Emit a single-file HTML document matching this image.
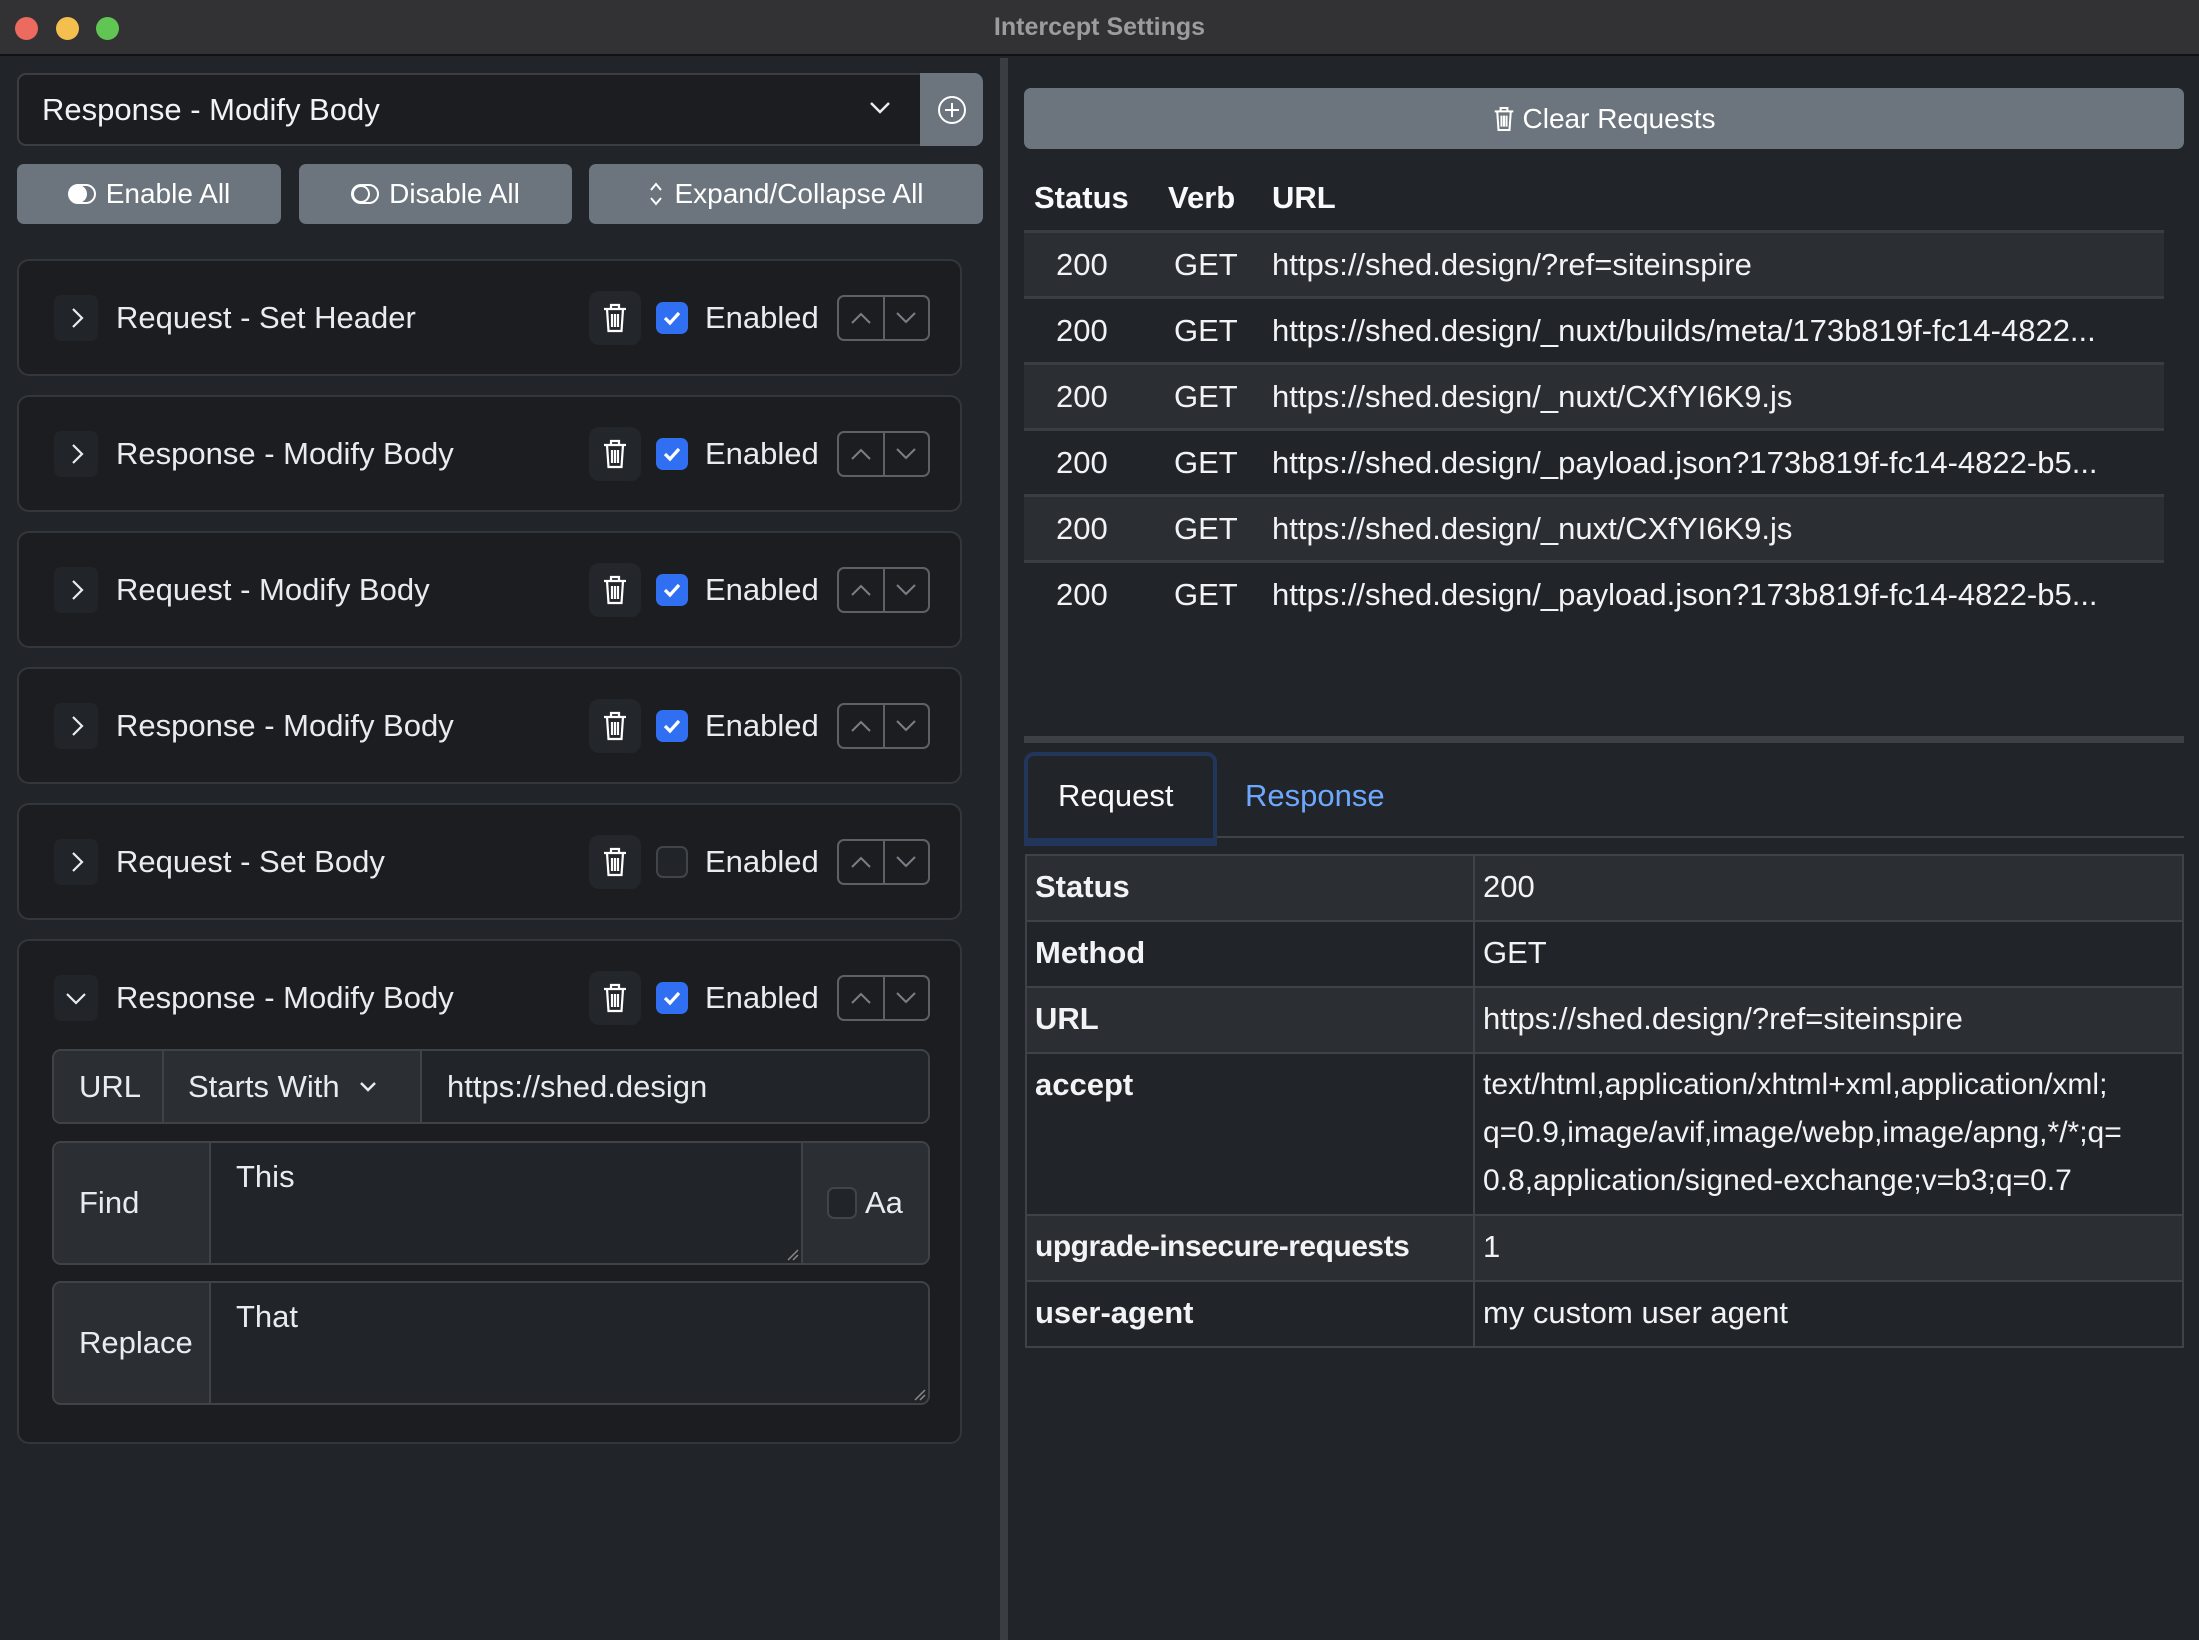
<!DOCTYPE html>
<html><head><meta charset="utf-8"><style>
*{box-sizing:border-box;margin:0;padding:0}
body{width:2199px;height:1640px;background:#212529;font-family:"Liberation Sans",sans-serif;color:#dee2e6;position:relative;overflow:hidden}
.a{position:absolute}
.title{left:0;top:0;width:2199px;height:56px;background:#323235;border-bottom:2px solid #111;text-align:center;line-height:54px;font-size:25px;font-weight:bold;color:#9c9c9e}
.dot{top:17px;width:23px;height:23px;border-radius:50%}
.btn{background:#6c757d;border-radius:7px;color:#fff;font-size:28px;display:flex;align-items:center;justify-content:center;gap:10px}
.card{left:17px;width:945px;background:#1b1d21;border:2px solid #33363b;border-radius:12px}
.chev{left:35px;width:44px;height:46px;background:#212429;border-radius:7px}
.lbl{left:97px;font-size:31px;color:#e9ecef;line-height:40px}
.trash{left:570px;width:52px;height:54px;background:#23262b;border-radius:10px;display:flex;align-items:center;justify-content:center}
.cb{left:637px;width:32px;height:32px;border-radius:7px;background:#316ff2;display:flex;align-items:center;justify-content:center}
.cb.off{background:#212429;border:2px solid #41454b}
.en{left:686px;font-size:31px;color:#e9ecef;line-height:40px}
.ud{left:818px;width:93px;height:46px;border:2px solid #5c6167;border-radius:7px;display:flex}
.ud div{flex:1;display:flex;align-items:center;justify-content:center}
.ud div+div{border-left:2px solid #5c6167}
.cell{font-size:31px;color:#e9ecef}
.row{left:1024px;width:1140px;height:66px;border-top:3px solid #3a3d42;font-size:31px;color:#f1f3f5;line-height:63px}
.row span{position:absolute;white-space:nowrap}
.dt{left:1025px;width:1159px;border:2px solid #3f4348;border-collapse:collapse;font-size:31px;color:#f1f3f5}
.dt td{border:2px solid #3f4348;padding:0 8px;vertical-align:top;line-height:48px}
</style></head><body>
<div class="a title">Intercept Settings</div>
<div class="a dot" style="left:15px;background:#ed6a5e"></div>
<div class="a dot" style="left:56px;background:#f5bf4f"></div>
<div class="a dot" style="left:96px;background:#61c554"></div>

<div class="a" style="left:1000px;top:58px;width:8px;height:1582px;background:#3a3d41"></div>
<div class="a" style="left:17px;top:73px;width:966px;height:73px;background:#1b1d21;border:2px solid #3a3d42;border-radius:9px"></div>
<div class="a" style="left:42px;top:90px;font-size:31px;color:#f1f3f5;line-height:40px">Response - Modify Body</div>
<svg class="a" style="left:868px;top:100px" width="24" height="16" viewBox="0 0 24 16"><path d="M3 3l9 9 9-9" fill="none" stroke="#e9ecef" stroke-width="2.5"/></svg>
<div class="a" style="left:920px;top:73px;width:63px;height:73px;background:#6c757d;border-radius:0 9px 9px 0"></div>
<svg class="a" style="left:936px;top:94px" width="32" height="32" viewBox="0 0 32 32"><circle cx="16" cy="16" r="13" fill="none" stroke="#fff" stroke-width="2"/><path d="M16 9v14M9 16h14" stroke="#fff" stroke-width="2"/></svg>

<div class="a btn" style="left:17px;top:164px;width:264px;height:60px"><svg width="28" height="20" viewBox="0 0 28 20"><rect x="1" y="1" width="26" height="18" rx="9" fill="none" stroke="#fff" stroke-width="2"/><circle cx="10" cy="10" r="9" fill="#fff"/></svg>Enable All</div>
<div class="a btn" style="left:299px;top:164px;width:273px;height:60px"><svg width="28" height="20" viewBox="0 0 28 20"><rect x="1" y="1" width="26" height="18" rx="9" fill="none" stroke="#fff" stroke-width="2"/><circle cx="10" cy="10" r="8" fill="none" stroke="#fff" stroke-width="2"/></svg>Disable All</div>
<div class="a btn" style="left:589px;top:164px;width:394px;height:60px"><svg width="16" height="26" viewBox="0 0 16 26"><path d="M3 9l5-6 5 6M3 17l5 6 5-6" fill="none" stroke="#fff" stroke-width="2"/></svg>Expand/Collapse All</div>

<div class="a card" style="top:259px;height:117px">
 <div class="a chev" style="top:34px"><svg width="44" height="46" viewBox="0 0 44 46"><path d="M19 14l9 9-9 9" fill="none" stroke="#e9ecef" stroke-width="2.2"/></svg></div>
 <div class="a lbl" style="top:37px">Request - Set Header</div>
 <div class="a trash" style="top:30px"><svg width="26" height="32" viewBox="0 0 26 32"><path d="M2 7h22M9 7V3h8v4M5 7l1.5 22h13L21 7M10 12v13M13 12v13M16 12v13" fill="none" stroke="#fff" stroke-width="2.2"/></svg></div>
 <div class="a cb" style="top:41px"><svg width="20" height="16" viewBox="0 0 20 16"><path d="M3 8l5 5 9-10" fill="none" stroke="#fff" stroke-width="3.2"/></svg></div>
 <div class="a en" style="top:37px">Enabled</div>
 <div class="a ud" style="top:34px"><div><svg width="24" height="14"><path d="M3 12l9-9 9 9" fill="none" stroke="#7a7f86" stroke-width="2"/></svg></div><div><svg width="24" height="14"><path d="M3 2l9 9 9-9" fill="none" stroke="#7a7f86" stroke-width="2"/></svg></div></div>
</div>
<div class="a card" style="top:395px;height:117px">
 <div class="a chev" style="top:34px"><svg width="44" height="46" viewBox="0 0 44 46"><path d="M19 14l9 9-9 9" fill="none" stroke="#e9ecef" stroke-width="2.2"/></svg></div>
 <div class="a lbl" style="top:37px">Response - Modify Body</div>
 <div class="a trash" style="top:30px"><svg width="26" height="32" viewBox="0 0 26 32"><path d="M2 7h22M9 7V3h8v4M5 7l1.5 22h13L21 7M10 12v13M13 12v13M16 12v13" fill="none" stroke="#fff" stroke-width="2.2"/></svg></div>
 <div class="a cb" style="top:41px"><svg width="20" height="16" viewBox="0 0 20 16"><path d="M3 8l5 5 9-10" fill="none" stroke="#fff" stroke-width="3.2"/></svg></div>
 <div class="a en" style="top:37px">Enabled</div>
 <div class="a ud" style="top:34px"><div><svg width="24" height="14"><path d="M3 12l9-9 9 9" fill="none" stroke="#7a7f86" stroke-width="2"/></svg></div><div><svg width="24" height="14"><path d="M3 2l9 9 9-9" fill="none" stroke="#7a7f86" stroke-width="2"/></svg></div></div>
</div>
<div class="a card" style="top:531px;height:117px">
 <div class="a chev" style="top:34px"><svg width="44" height="46" viewBox="0 0 44 46"><path d="M19 14l9 9-9 9" fill="none" stroke="#e9ecef" stroke-width="2.2"/></svg></div>
 <div class="a lbl" style="top:37px">Request - Modify Body</div>
 <div class="a trash" style="top:30px"><svg width="26" height="32" viewBox="0 0 26 32"><path d="M2 7h22M9 7V3h8v4M5 7l1.5 22h13L21 7M10 12v13M13 12v13M16 12v13" fill="none" stroke="#fff" stroke-width="2.2"/></svg></div>
 <div class="a cb" style="top:41px"><svg width="20" height="16" viewBox="0 0 20 16"><path d="M3 8l5 5 9-10" fill="none" stroke="#fff" stroke-width="3.2"/></svg></div>
 <div class="a en" style="top:37px">Enabled</div>
 <div class="a ud" style="top:34px"><div><svg width="24" height="14"><path d="M3 12l9-9 9 9" fill="none" stroke="#7a7f86" stroke-width="2"/></svg></div><div><svg width="24" height="14"><path d="M3 2l9 9 9-9" fill="none" stroke="#7a7f86" stroke-width="2"/></svg></div></div>
</div>
<div class="a card" style="top:667px;height:117px">
 <div class="a chev" style="top:34px"><svg width="44" height="46" viewBox="0 0 44 46"><path d="M19 14l9 9-9 9" fill="none" stroke="#e9ecef" stroke-width="2.2"/></svg></div>
 <div class="a lbl" style="top:37px">Response - Modify Body</div>
 <div class="a trash" style="top:30px"><svg width="26" height="32" viewBox="0 0 26 32"><path d="M2 7h22M9 7V3h8v4M5 7l1.5 22h13L21 7M10 12v13M13 12v13M16 12v13" fill="none" stroke="#fff" stroke-width="2.2"/></svg></div>
 <div class="a cb" style="top:41px"><svg width="20" height="16" viewBox="0 0 20 16"><path d="M3 8l5 5 9-10" fill="none" stroke="#fff" stroke-width="3.2"/></svg></div>
 <div class="a en" style="top:37px">Enabled</div>
 <div class="a ud" style="top:34px"><div><svg width="24" height="14"><path d="M3 12l9-9 9 9" fill="none" stroke="#7a7f86" stroke-width="2"/></svg></div><div><svg width="24" height="14"><path d="M3 2l9 9 9-9" fill="none" stroke="#7a7f86" stroke-width="2"/></svg></div></div>
</div>
<div class="a card" style="top:803px;height:117px">
 <div class="a chev" style="top:34px"><svg width="44" height="46" viewBox="0 0 44 46"><path d="M19 14l9 9-9 9" fill="none" stroke="#e9ecef" stroke-width="2.2"/></svg></div>
 <div class="a lbl" style="top:37px">Request - Set Body</div>
 <div class="a trash" style="top:30px"><svg width="26" height="32" viewBox="0 0 26 32"><path d="M2 7h22M9 7V3h8v4M5 7l1.5 22h13L21 7M10 12v13M13 12v13M16 12v13" fill="none" stroke="#fff" stroke-width="2.2"/></svg></div>
 <div class="a cb off" style="top:41px"></div>
 <div class="a en" style="top:37px">Enabled</div>
 <div class="a ud" style="top:34px"><div><svg width="24" height="14"><path d="M3 12l9-9 9 9" fill="none" stroke="#7a7f86" stroke-width="2"/></svg></div><div><svg width="24" height="14"><path d="M3 2l9 9 9-9" fill="none" stroke="#7a7f86" stroke-width="2"/></svg></div></div>
</div>
<div class="a card" style="top:939px;height:505px">
 <div class="a chev" style="top:34px"><svg width="44" height="46" viewBox="0 0 44 46"><path d="M13 19l9 9 9-9" fill="none" stroke="#e9ecef" stroke-width="2.2"/></svg></div>
 <div class="a lbl" style="top:37px">Response - Modify Body</div>
 <div class="a trash" style="top:30px"><svg width="26" height="32" viewBox="0 0 26 32"><path d="M2 7h22M9 7V3h8v4M5 7l1.5 22h13L21 7M10 12v13M13 12v13M16 12v13" fill="none" stroke="#fff" stroke-width="2.2"/></svg></div>
 <div class="a cb" style="top:41px"><svg width="20" height="16" viewBox="0 0 20 16"><path d="M3 8l5 5 9-10" fill="none" stroke="#fff" stroke-width="3.2"/></svg></div>
 <div class="a en" style="top:37px">Enabled</div>
 <div class="a ud" style="top:34px"><div><svg width="24" height="14"><path d="M3 12l9-9 9 9" fill="none" stroke="#7a7f86" stroke-width="2"/></svg></div><div><svg width="24" height="14"><path d="M3 2l9 9 9-9" fill="none" stroke="#7a7f86" stroke-width="2"/></svg></div></div>

 <div class="a" style="left:33px;top:108px;width:878px;height:75px;border:2px solid #3f4348;border-radius:9px;overflow:hidden;display:flex;background:#212529">
  <div class="cell" style="width:110px;background:#2b2e33;border-right:2px solid #3f4348;display:flex;align-items:center;padding-left:25px">URL</div>
  <div class="cell" style="width:258px;background:#2b2e33;border-right:2px solid #3f4348;display:flex;align-items:center;padding-left:24px;gap:18px">Starts With <svg width="20" height="14"><path d="M3 3l7 7 7-7" fill="none" stroke="#e9ecef" stroke-width="2.5"/></svg></div>
  <div class="cell" style="flex:1;display:flex;align-items:center;padding-left:25px">https://shed.design</div>
 </div>
 <div class="a" style="left:33px;top:200px;width:878px;height:124px;border:2px solid #3f4348;border-radius:9px;overflow:hidden;display:flex;background:#212529">
  <div class="cell" style="width:157px;background:#2b2e33;border-right:2px solid #3f4348;display:flex;align-items:center;padding-left:25px">Find</div>
  <div class="cell" style="width:592px;border-right:2px solid #3f4348;padding:16px 0 0 25px;position:relative">This<svg style="position:absolute;right:2px;bottom:2px" width="14" height="14"><path d="M13 3L3 13M13 8L8 13" stroke="#888" stroke-width="1.5"/></svg></div>
  <div class="cell" style="flex:1;background:#2b2e33;display:flex;align-items:center;padding-left:24px;gap:8px"><span style="display:inline-block;width:30px;height:32px;border:2px solid #41454b;border-radius:7px;background:#212429"></span>Aa</div>
 </div>
 <div class="a" style="left:33px;top:340px;width:878px;height:124px;border:2px solid #3f4348;border-radius:9px;overflow:hidden;display:flex;background:#212529">
  <div class="cell" style="width:157px;background:#2b2e33;border-right:2px solid #3f4348;display:flex;align-items:center;padding-left:25px">Replace</div>
  <div class="cell" style="flex:1;padding:16px 0 0 25px;position:relative">That<svg style="position:absolute;right:2px;bottom:2px" width="14" height="14"><path d="M13 3L3 13M13 8L8 13" stroke="#888" stroke-width="1.5"/></svg></div>
 </div>
</div>

<div class="a btn" style="left:1024px;top:88px;width:1160px;height:61px;gap:8px"><svg width="22" height="28" viewBox="0 0 26 32"><path d="M2 7h22M9 7V3h8v4M5 7l1.5 22h13L21 7M10 12v13M13 12v13M16 12v13" fill="none" stroke="#fff" stroke-width="2.4"/></svg>Clear Requests</div>

<div class="a" style="left:1034px;top:180px;font-size:31px;font-weight:bold;color:#f8f9fa">Status</div>
<div class="a" style="left:1168px;top:180px;font-size:31px;font-weight:bold;color:#f8f9fa">Verb</div>
<div class="a" style="left:1272px;top:180px;font-size:31px;font-weight:bold;color:#f8f9fa">URL</div>

<div class="a row" style="top:230px;background:#2b2e33"><span style="left:32px">200</span><span style="left:150px">GET</span><span style="left:248px">https://shed.design/?ref=siteinspire</span></div>
<div class="a row" style="top:296px"><span style="left:32px">200</span><span style="left:150px">GET</span><span style="left:248px">https://shed.design/_nuxt/builds/meta/173b819f-fc14-4822...</span></div>
<div class="a row" style="top:362px;background:#2b2e33"><span style="left:32px">200</span><span style="left:150px">GET</span><span style="left:248px">https://shed.design/_nuxt/CXfYI6K9.js</span></div>
<div class="a row" style="top:428px"><span style="left:32px">200</span><span style="left:150px">GET</span><span style="left:248px">https://shed.design/_payload.json?173b819f-fc14-4822-b5...</span></div>
<div class="a row" style="top:494px;background:#2b2e33"><span style="left:32px">200</span><span style="left:150px">GET</span><span style="left:248px">https://shed.design/_nuxt/CXfYI6K9.js</span></div>
<div class="a row" style="top:560px"><span style="left:32px">200</span><span style="left:150px">GET</span><span style="left:248px">https://shed.design/_payload.json?173b819f-fc14-4822-b5...</span></div>

<div class="a" style="left:1024px;top:736px;width:1160px;height:7px;background:#3d4044"></div>
<div class="a" style="left:1024px;top:836px;width:1160px;height:2px;background:#3f4348"></div>
<div class="a" style="left:1024px;top:752px;width:193px;height:92px;border:4px solid #22355a;border-bottom:none;border-radius:10px 10px 0 0;background:#212529"></div>
<div class="a" style="left:1024px;top:838px;width:193px;height:8px;background:#22355a"></div>
<div class="a" style="left:1058px;top:778px;font-size:31px;color:#f8f9fa">Request</div>
<div class="a" style="left:1245px;top:778px;font-size:31px;color:#6ea8fe">Response</div>

<table class="a dt" style="top:854px">
<tr style="height:66px;background:#2b2e33"><td style="width:448px;font-weight:bold;line-height:62px">Status</td><td style="line-height:62px">200</td></tr>
<tr style="height:66px"><td style="font-weight:bold;line-height:62px">Method</td><td style="line-height:62px">GET</td></tr>
<tr style="height:66px;background:#2b2e33"><td style="font-weight:bold;line-height:62px">URL</td><td style="line-height:62px">https://shed.design/?ref=siteinspire</td></tr>
<tr style="height:162px"><td style="font-weight:bold;padding-top:7px">accept</td><td style="padding-top:7px;word-break:break-all;font-size:30px">text/html,application/xhtml+xml,application/xml;<br>q=0.9,image/avif,image/webp,image/apng,*/*;q=<br>0.8,application/signed-exchange;v=b3;q=0.7</td></tr>
<tr style="height:66px;background:#2b2e33"><td style="font-weight:bold;line-height:62px;white-space:nowrap;font-size:30px;letter-spacing:-0.5px">upgrade-insecure-requests</td><td style="line-height:62px">1</td></tr>
<tr style="height:66px"><td style="font-weight:bold;line-height:62px">user-agent</td><td style="line-height:62px">my custom user agent</td></tr>
</table>
</body></html>
